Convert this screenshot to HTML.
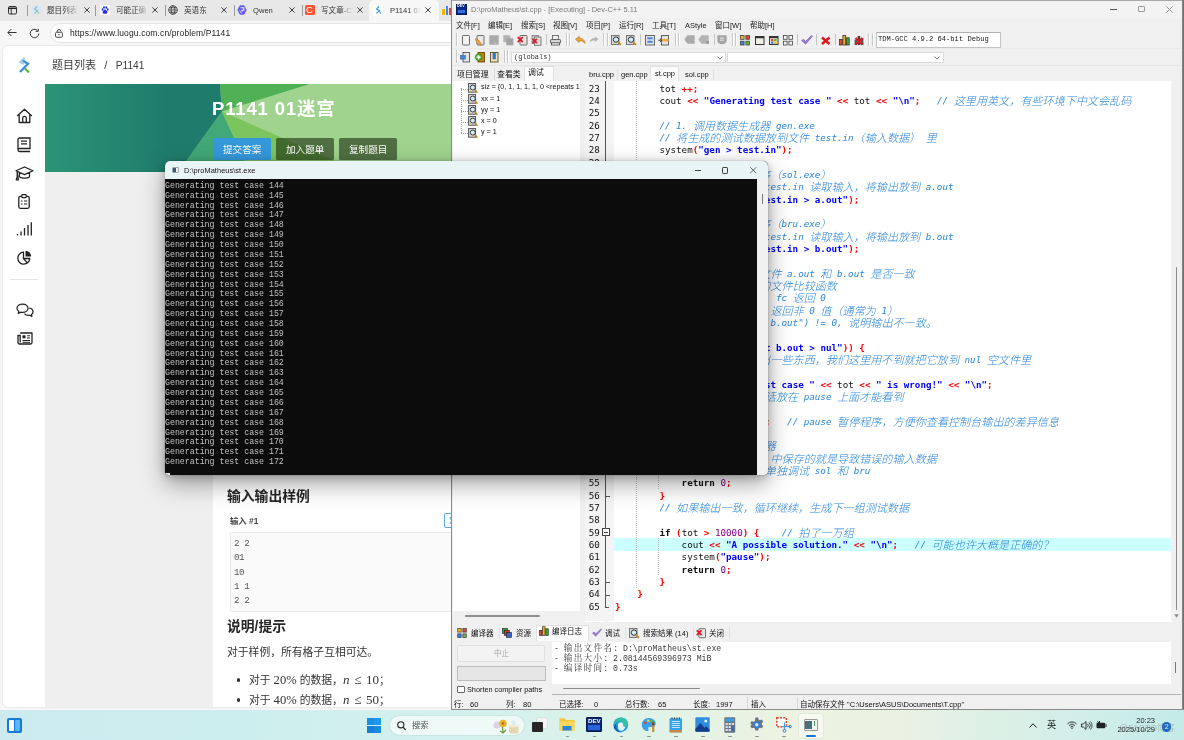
<!DOCTYPE html>
<html lang="zh-CN">
<head>
<meta charset="utf-8">
<title>P1141 01迷宫 - Dev-C++</title>
<style>
*{box-sizing:border-box;margin:0;padding:0}
html,body{width:1184px;height:740px;overflow:hidden;background:#f0f0f0}
body{position:relative;font-family:"Liberation Sans","Noto Sans CJK SC",sans-serif;font-size:7.4px;color:#222;-webkit-font-smoothing:antialiased}
.abs{position:absolute}
.t{position:absolute;white-space:nowrap;line-height:1}
svg{position:absolute;overflow:visible}
.t,.tabt,.h2,.dvt,.menu,.ln,.cl,.co,.logt{will-change:transform}
/* ---------- browser ---------- */
#br{position:absolute;left:0;top:0;width:453px;height:710px;background:#f7f7f7;overflow:hidden}
#tabbar{position:absolute;left:0;top:0;width:453px;height:20.6px;background:#e8e8e8}
.tabt{position:absolute;top:6px;font-size:7.6px;color:#333;white-space:nowrap;line-height:9px;overflow:hidden}
.tabx{position:absolute;top:4.5px;font-size:10px;color:#333;line-height:10px}
.tsep{position:absolute;top:5px;width:1px;height:11px;background:#9a9a9a}
#acttab{position:absolute;left:369px;top:0;width:70px;height:20.6px;background:#f7f7f7;border-radius:5px 5px 0 0}
#addr{position:absolute;left:50px;top:23px;width:420px;height:20px;border-radius:10px;background:#fff;border:1px solid #e3e3e3}
#page{position:absolute;left:3px;top:46px;width:460px;height:661px;background:#efefef;border-radius:5px 0 0 5px;overflow:hidden;box-shadow:0 0 2px rgba(0,0,0,.18)}
#lghead{position:absolute;left:0;top:0;width:460px;height:39px;background:#fff}
#lgside{position:absolute;left:0;top:39px;width:42px;height:625px;background:#fff}
#card{position:absolute;left:210px;top:126px;width:260px;height:540px;background:#fff}
.h2{position:absolute;font-weight:bold;font-size:13.8px;color:#262626;line-height:16px;white-space:nowrap}
.kx{font-family:"Liberation Serif","Noto Serif CJK SC",serif}
/* ---------- dev-c++ ---------- */
#dv{position:absolute;left:451px;top:0;width:733px;height:710px;background:#f0f0f0;border-left:1px solid #8c8c8c;border-bottom:1px solid #8a8a8a;overflow:hidden}
#dvtitle{position:absolute;left:0;top:0;width:733px;height:18px;background:#f3f3f3}
.menu{position:absolute;top:20.5px;font-size:7.5px;color:#1a1a1a;white-space:nowrap;line-height:9px}
#editor{position:absolute;left:133px;top:81px;width:588px;height:540.6px;background:#fff;overflow:hidden}
#gutter{position:absolute;left:0;top:0;width:28.5px;height:540px;background:#f4f4f4}
.ln{position:absolute;left:0px;width:14.5px;text-align:right;font-family:"DejaVu Sans Mono","Liberation Mono",monospace;font-size:9.2px;line-height:12.33px;height:12.33px;color:#111;letter-spacing:-0.2px}
.cl{position:absolute;left:29.7px;white-space:pre;font-family:"DejaVu Sans Mono","Liberation Mono","Noto Sans CJK SC",monospace;font-size:9.22px;line-height:12.33px;height:12.33px;color:#111}
.cl b{font-weight:bold}
.cm{color:#2a86da;font-style:italic}
.cm i{font-style:italic;font-size:11.1px;font-family:"Noto Sans CJK SC",sans-serif;font-weight:300;line-height:12.33px;vertical-align:top;display:inline-block;height:12.33px;margin-top:-0.6px}
.st{color:#0000ff;font-weight:bold}
.sy{color:#ff0000;font-weight:bold}
.nu{color:#800080}
.kw{font-weight:bold}
.dvt{position:absolute;white-space:nowrap;font-size:7.5px;line-height:9px;color:#111}
/* ---------- console ---------- */
#con{position:absolute;left:165px;top:161px;width:602.8px;height:313.5px;background:#0c0c0c;border-radius:5px 5px 4px 4px;box-shadow:0 9px 24px rgba(0,0,0,.36),0 2px 8px rgba(0,0,0,.22),0 0 1px rgba(0,0,0,.5);overflow:hidden}
#contitle{position:absolute;left:0;top:0;width:603px;height:18.4px;background:#e9f4f7}
#conscroll{position:absolute;left:592.3px;top:18.4px;width:10.6px;height:296px;background:#f1f1f1}
.co{position:absolute;left:0;white-space:pre;font-family:"Liberation Mono",monospace;font-size:8.25px;line-height:9.87px;height:9.87px;color:#c2c2c2}
/* ---------- taskbar ---------- */
#tb{position:absolute;left:0;top:710px;width:1184px;height:30px;background:linear-gradient(90deg,#cdebef 0%,#cdeeee 20%,#d4f1ed 42%,#e3f3e6 58%,#eef3e1 68%,#e9f2e3 76%,#d6efe8 88%,#c4ebe8 100%)}
.ind{position:absolute;top:25.5px;width:3.5px;height:1.3px;border-radius:1px;background:#8a9496}
.logt{position:absolute;left:101.5px;white-space:pre;font-family:"Liberation Mono",monospace;font-size:8.2px;line-height:10px;color:#3a3a3a}
.lc{font-family:"Noto Serif CJK SC","Noto Sans CJK SC",serif;font-size:8.6px;letter-spacing:1.27px}
</style>
</head>
<body>
<div id="br">
 <div id="tabbar">
  <!-- tab actions icon -->
  <svg style="left:8px;top:5.5px" width="9" height="8.5" viewBox="0 0 9 8.5"><rect x=".5" y=".5" width="8" height="7.5" rx="1.3" fill="none" stroke="#222" stroke-width=".95"/><path d="M.5 2.300h8" stroke="#222" stroke-width="1.5" fill="none"/><path d="M3.200 2.300v5.7" stroke="#222" stroke-width=".9" fill="none"/></svg>
  <div class="tsep" style="left:27px"></div>
  <!-- tab1 -->
  <div class="abs" style="left:32px;top:5px;width:9px;height:10px;background:#dfe6ee;border-radius:1px"></div>
  <svg style="left:33px;top:6px;opacity:.55" width="7" height="8" viewBox="0 0 14 16"><path d="M8 1L3 6l6 3-6 6" fill="none" stroke="#3498db" stroke-width="2.2"/><path d="M8 10l4 5" stroke="#52c41a" stroke-width="2.2"/></svg>
  <div class="tabt" style="left:47px;width:32px;-webkit-mask-image:linear-gradient(90deg,#000 55%,transparent 98%)">题目列表</div>
  <svg style="left:84.2px;top:7px" width="6" height="6" viewBox="0 0 6 6"><path d="M.4.4l5.200 5.200M5.600.4L.4 5.6" stroke="#222" stroke-width=".85"/></svg>
  <div class="tsep" style="left:95px"></div>
  <!-- tab2 baidu -->
  <div class="abs" style="left:100px;top:5px;width:10px;height:10px;background:#fff;border-radius:1px"></div>
  <svg style="left:101px;top:6px" width="8" height="8" viewBox="0 0 16 16"><g fill="#2932e1"><ellipse cx="3" cy="7" rx="1.8" ry="2.4"/><ellipse cx="6" cy="3" rx="1.8" ry="2.4"/><ellipse cx="10.5" cy="3" rx="1.8" ry="2.4"/><ellipse cx="13.5" cy="7" rx="1.8" ry="2.4"/><path d="M8 7c2 0 5 4 5 6s-2 2.5-5 2.5S3 15 3 13s3-6 5-6z"/></g></svg>
  <div class="tabt" style="left:116px;width:32px;-webkit-mask-image:linear-gradient(90deg,#000 60%,transparent 100%)">可能正确</div>
  <svg style="left:152.2px;top:7px" width="6" height="6" viewBox="0 0 6 6"><path d="M.4.4l5.200 5.200M5.600.4L.4 5.6" stroke="#222" stroke-width=".85"/></svg>
  <div class="tsep" style="left:165px"></div>
  <!-- tab3 globe -->
  <svg style="left:168px;top:5px" width="10" height="10" viewBox="0 0 20 20"><g fill="none" stroke="#333" stroke-width="1.6"><circle cx="10" cy="10" r="8.5"/><ellipse cx="10" cy="10" rx="3.8" ry="8.5"/><path d="M1.5 10h17M3 5.5h14M3 14.5h14"/></g></svg>
  <div class="tabt" style="left:184px;width:26px">英语东</div>
  <svg style="left:221.2px;top:7px" width="6" height="6" viewBox="0 0 6 6"><path d="M.4.4l5.200 5.200M5.600.4L.4 5.6" stroke="#222" stroke-width=".85"/></svg>
  <div class="tsep" style="left:234px"></div>
  <!-- tab4 qwen -->
  <svg style="left:237px;top:5px" width="10" height="10" viewBox="0 0 20 20"><path d="M6 1.500h8l4.500 8.500-4.500 8.500H6L1.500 10z" fill="#5f58ea" stroke="#5f58ea" stroke-width="1.5" stroke-linejoin="round"/><path d="M6.500 5.500h8L9 15M5 10.500l3.500 6M11 4l4 6.500h-7" stroke="#fff" stroke-width="1.4" fill="none"/></svg>
  <div class="tabt" style="left:253px;width:30px">Qwen</div>
  <svg style="left:289.2px;top:7px" width="6" height="6" viewBox="0 0 6 6"><path d="M.4.4l5.200 5.200M5.600.4L.4 5.6" stroke="#222" stroke-width=".85"/></svg>
  <div class="tsep" style="left:302px"></div>
  <!-- tab5 csdn -->
  <div class="abs" style="left:305px;top:5px;width:10px;height:10px;background:#fc5531;border-radius:1.5px"></div>
  <div class="t" style="left:306.3px;top:5.3px;font-size:9.5px;color:#fff;font-weight:normal">C</div>
  <div class="tabt" style="left:321px;width:32px;-webkit-mask-image:linear-gradient(90deg,#000 60%,transparent 100%)">写文章-C</div>
  <svg style="left:357.2px;top:7px" width="6" height="6" viewBox="0 0 6 6"><path d="M.4.4l5.200 5.200M5.600.4L.4 5.6" stroke="#222" stroke-width=".85"/></svg>
  <!-- active tab -->
  <div id="acttab"></div>
  <div class="abs" style="left:373px;top:4.5px;width:10px;height:11px;background:#fff;border-radius:1px"></div>
  <svg style="left:374.5px;top:6px" width="7" height="8" viewBox="0 0 14 16"><path d="M8 1L3 6l6 3-6 6" fill="none" stroke="#3498db" stroke-width="2.2"/><path d="M8 10l4 5" stroke="#3498db" stroke-width="2.2"/></svg>
  <div class="tabt" style="left:389.5px;width:31px;-webkit-mask-image:linear-gradient(90deg,#000 60%,transparent 100%)">P1141 01</div>
  <svg style="left:425.2px;top:7px" width="6" height="6" viewBox="0 0 6 6"><path d="M.4.4l5.200 5.200M5.600.4L.4 5.6" stroke="#222" stroke-width=".85"/></svg>
  <!-- next tab icon -->
  <div class="abs" style="left:442px;top:9px;width:2.5px;height:6px;background:#f4b400"></div>
  <div class="abs" style="left:445.5px;top:6px;width:2.5px;height:9px;background:#4285f4"></div>
  <div class="abs" style="left:449px;top:8px;width:2.5px;height:7px;background:#db4437"></div>
 </div>
 <!-- toolbar -->
 <svg style="left:7px;top:28px" width="10" height="9" viewBox="0 0 10 9"><path d="M9.6 4.5H1M4.4 1L.9 4.5 4.4 8" fill="none" stroke="#333" stroke-width="1"/></svg>
 <svg style="left:29px;top:27.5px" width="11" height="11" viewBox="0 0 22 22"><path d="M19.5 11a8.5 8.5 0 1 1-2.6-6.1" fill="none" stroke="#333" stroke-width="2"/><path d="M18.5 1.5v5.2h-5.2" fill="none" stroke="#333" stroke-width="2"/></svg>
 <div id="addr"></div>
 <svg style="left:55px;top:28.5px" width="8" height="9" viewBox="0 0 16 18"><rect x="1.2" y="6.5" width="13.6" height="10" rx="2" fill="none" stroke="#333" stroke-width="1.8"/><path d="M4.5 6.5V4.5a3.5 3.5 0 0 1 7 0" fill="none" stroke="#333" stroke-width="1.8"/><circle cx="8" cy="11.5" r="1.4" fill="#333"/></svg>
 <div class="t" style="left:70px;top:29px;font-size:8.5px;color:#222;letter-spacing:.12px">https://www.luogu.com.cn/problem/P1141</div>

 <div id="page">
  <div id="lghead"></div>
  <div id="lgside"></div>
  <!-- luogu logo -->
  <svg style="left:15.5px;top:10.5px" width="11" height="16" viewBox="0 0 22 32"><path d="M11 2L3 10l7 4" fill="none" stroke="#9ccbf0" stroke-width="4.4" stroke-linejoin="miter"/><path d="M8 7.500l10 6L2 30" fill="none" stroke="#3b8fd9" stroke-width="4.6"/><path d="M12 23l8 8" stroke="#5cb531" stroke-width="4.4"/></svg>
  <div class="t" style="left:49px;top:14.2px;font-size:11px;color:#3c3c3c;word-spacing:1.1px">题目列表&nbsp; /&nbsp; <span style="font-size:10.2px">P1141</span></div>
  <!-- banner -->
  <svg style="left:42px;top:38px" width="420" height="88" viewBox="0 0 420 88"><defs><linearGradient id="bg1" x1="0" x2="1" y1="0" y2="0"><stop offset="0" stop-color="#2b9476"/><stop offset=".68" stop-color="#1f7c6c"/><stop offset="1" stop-color="#1f7c6c"/></linearGradient></defs>
   <rect width="420" height="88" fill="#a0d38e"/>
   <polygon points="176.8,27.4 315.5,88 205,88" fill="#7cc55e"/>
   <polygon points="176.8,27.4 205,88 133.3,88" fill="#41a878"/>
   <polygon points="175,0 264.8,0 176.8,27.4" fill="#4fb056"/>
   <polygon points="0,0 175,0 176.8,27.4 133.3,88 0,88" fill="url(#bg1)"/>
  </svg>
  <div class="t" style="left:208.5px;top:53.7px;font-size:18.5px;font-weight:bold;color:#fff;letter-spacing:.85px">P1141 01迷宫</div>
  <div class="abs" style="left:210px;top:92px;width:58px;height:21.5px;background:#3498db;border-radius:1.5px"></div>
  <div class="t" style="left:220px;top:98.5px;font-size:9.6px;color:#fff">提交答案</div>
  <div class="abs" style="left:273.4px;top:92px;width:57.5px;height:21.5px;background:rgba(30,50,20,.62);border-radius:1.5px"></div>
  <div class="t" style="left:283px;top:98.5px;font-size:9.6px;color:#fff">加入题单</div>
  <div class="abs" style="left:336px;top:92px;width:58px;height:21.5px;background:rgba(30,50,20,.62);border-radius:1.5px"></div>
  <div class="t" style="left:346px;top:98.5px;font-size:9.6px;color:#fff">复制题目</div>
  <!-- card -->
  <div id="card"></div>
  <div class="h2" style="left:224px;top:442.5px">输入输出样例</div>
  <div class="t" style="left:227px;top:470.5px;font-size:8.4px;font-weight:bold;color:#444">输入 #1</div>
  <div class="abs" style="left:441px;top:467.2px;width:30px;height:15.3px;border:1px solid #5aa9e2;border-radius:2px;background:#fff"></div>
  <div class="t" style="left:445.8px;top:470.8px;font-size:7.8px;color:#3498db">复制</div>
  <div class="abs" style="left:227px;top:486px;width:240px;height:80px;background:#fafafa;border:1px solid #e8e8e8;border-radius:1.5px"></div>
  <div class="t kx" style="left:231px;top:491px;font-size:9.2px;line-height:14.3px;color:#555;white-space:pre;font-family:'Liberation Mono',monospace;letter-spacing:-.4px">2 2
01
10
1 1
2 2</div>
  <div class="h2" style="left:224px;top:572.8px">说明/提示</div>
  <div class="t" style="left:224px;top:601.2px;font-size:10.8px;color:#333">对于样例，所有格子互相可达。</div>
  <div class="abs" style="left:233.5px;top:632.2px;width:3.4px;height:3.4px;border-radius:50%;background:#333"></div>
  <div class="t" style="left:246px;top:627px;font-size:10.8px;color:#333">对于 <span class="kx" style="font-size:12.6px">20%</span> 的数据，<span class="kx" style="font-size:13px;word-spacing:1.5px"><i>n</i> ≤ 10</span>；</div>
  <div class="abs" style="left:233.5px;top:652.2px;width:3.4px;height:3.4px;border-radius:50%;background:#333"></div>
  <div class="t" style="left:246px;top:647px;font-size:10.8px;color:#333">对于 <span class="kx" style="font-size:12.6px">40%</span> 的数据，<span class="kx" style="font-size:13px;word-spacing:1.5px"><i>n</i> ≤ 50</span>；</div>
  <!-- sidebar icons -->
  <svg style="left:12.5px;top:61.8px" width="17" height="16" viewBox="0 0 17 16"><path d="M1.2 8L8.5 1.3 15.8 8M3.2 6.6v7.9h10.6V6.600M6.7 14.500V10.2a1.800 1.800 0 0 1 3.600 0V14.5" fill="none" stroke="#222" stroke-width="1.3" stroke-linejoin="round"/></svg>
  <svg style="left:14px;top:90.6px" width="14" height="15" viewBox="0 0 14 15"><path d="M1 12.500V2.500A1.500 1.500 0 0 1 2.500 1H13v10.500H2.500A1.500 1.500 0 0 0 1 13a1.500 1.500 0 0 0 1.500 1.500H13M4 4.200h6M4 6.800h6" fill="none" stroke="#222" stroke-width="1.3"/></svg>
  <svg style="left:11.5px;top:119.5px" width="19" height="15" viewBox="0 0 19 15"><path d="M9.500 1L1 4.800l8.500 3.800L18 4.800zM4.500 6.600v4.200c1.500 1.800 8.500 1.800 10 0V6.600M2.200 5.500v5.500l-1 2.800h2.200z" fill="none" stroke="#222" stroke-width="1.25" stroke-linejoin="round"/></svg>
  <svg style="left:15px;top:147.6px" width="12" height="15" viewBox="0 0 12 15"><rect x=".8" y="2.3" width="10.4" height="12" rx="1.5" fill="none" stroke="#222" stroke-width="1.3"/><rect x="3.8" y=".6" width="4.4" height="3" rx=".8" fill="#fff" stroke="#222" stroke-width="1.2"/><path d="M3 7h1.500M6 7h3.200M3 10h1.500M6 10h3.2" stroke="#222" stroke-width="1.2"/></svg>
  <svg style="left:13px;top:175.6px" width="16" height="14" viewBox="0 0 16 14"><path d="M1.500 13.500v-1.500M5 13.500v-4M8.500 13.500V6M12 13.500V3M15.300 13.500V.3" stroke="#222" stroke-width="1.3"/></svg>
  <svg style="left:14px;top:203.6px" width="15" height="15" viewBox="0 0 15 15"><path d="M6.500 2.200A6 6 0 1 0 12.800 8.500H6.500z" fill="none" stroke="#222" stroke-width="1.3" stroke-linejoin="round"/><path d="M8.500 .8a5.700 5.700 0 0 1 5.700 5.700H8.500z" fill="#222"/><path d="M6.500 8.500l4 4.5" stroke="#222" stroke-width="1.3"/></svg>
  <div class="abs" style="left:7px;top:232.7px;width:28px;height:1px;background:#e4e4e4"></div>
  <svg style="left:12.5px;top:257px" width="18" height="14" viewBox="0 0 18 14"><path d="M6.500 1C3.500 1 1 2.800 1 5.200c0 1.300.7 2.400 1.800 3.200L2.300 10.500l2.400-1.300c.6.100 1.200.2 1.800.2 3 0 5.500-1.800 5.500-4.200S9.500 1 6.500 1z" fill="none" stroke="#222" stroke-width="1.25" stroke-linejoin="round"/><path d="M13.200 5.200c2 .3 3.800 1.800 3.800 3.600 0 1.100-.6 2-1.500 2.700l.4 1.900-2.100-1.100c-2 .4-4.300-.3-5.300-1.7" fill="none" stroke="#222" stroke-width="1.25" stroke-linejoin="round"/></svg>
  <svg style="left:13.5px;top:286px" width="16" height="13" viewBox="0 0 16 13"><path d="M3.200 1H15v9.500a1.500 1.500 0 0 1-1.500 1.500H2.500A1.500 1.500 0 0 1 1 10.500V3.500h2.200V10.5" fill="none" stroke="#222" stroke-width="1.3" stroke-linejoin="round"/><rect x="5.5" y="3.3" width="3" height="3" fill="#222"/><path d="M10 3.800h3M10 6h3M5.500 8.500h7.500M5.500 10.300h7.5" stroke="#222" stroke-width="1"/></svg>
 </div>
</div>
<div id="dv">
 <div id="dvtitle"></div>
 <!-- app icon -->
 <div class="abs" style="left:4px;top:4px;width:10.5px;height:10.5px;background:#0a2a8c;border:1px solid #061a5c"></div>
 <div class="t" style="left:5px;top:5px;font-size:3.6px;font-weight:bold;color:#fff;letter-spacing:.1px">DEV</div>
 <div class="abs" style="left:5.5px;top:9.5px;width:7.5px;height:3.5px;background:#2f6fe0"></div>
 <div class="t" style="left:18.5px;top:5.5px;font-size:7.45px;color:#7a7a7a">D:\proMatheus\st.cpp - [Executing] - Dev-C++ 5.11</div>
 <!-- window controls -->
 <div class="abs" style="left:657.5px;top:9px;width:7px;height:1px;background:#555"></div>
 <div class="abs" style="left:686px;top:5.5px;width:6.5px;height:6.5px;border:1px solid #9a9a9a;border-radius:1px"></div>
 <svg style="left:713.5px;top:5.5px" width="7" height="7" viewBox="0 0 7 7"><path d="M.3.3l6.400 6.400M6.700.3L.3 6.7" stroke="#8f8f8f" stroke-width=".9"/></svg>
 <!-- menu -->
 <div class="menu" style="left:4px">文件[F]</div>
 <div class="menu" style="left:36px">编辑[E]</div>
 <div class="menu" style="left:68.5px">搜索[S]</div>
 <div class="menu" style="left:101px">视图[V]</div>
 <div class="menu" style="left:134px">项目[P]</div>
 <div class="menu" style="left:167px">运行[R]</div>
 <div class="menu" style="left:200px">工具[T]</div>
 <div class="menu" style="left:233px">AStyle</div>
 <div class="menu" style="left:263px">窗口[W]</div>
 <div class="menu" style="left:298px">帮助[H]</div>
 <!-- toolbar row separators -->
 <div class="abs" style="left:0;top:0;width:733px;height:1px;background:#a9a9a9"></div>
 <div class="abs" style="left:0;top:48px;width:733px;height:1px;background:#eaeaea"></div>
 <div class="abs" style="left:0;top:65px;width:733px;height:1px;background:#e6e6e6"></div>
 <div class="abs" style="left:3.5px;top:33px;width:1px;height:13px;background:#c9c9c9;box-shadow:1px 0 0 #fff"></div>
<svg style="left:9.5px;top:34.5px" width="8" height="10.5" viewBox="0 0 8 10.5"><rect x=".5" y=".5" width="7" height="9.5" rx=".8" fill="#f4f4f4" stroke="#6a6a6a" stroke-width="1"/></svg>
<svg style="left:23px;top:34.5px" width="9.5" height="10.5" viewBox="0 0 9.5 10.5"><rect x="2" y=".5" width="7" height="9.5" rx=".8" fill="#e9e9e9" stroke="#6a6a6a"/><path d="M.5 3.500C1 8 3.500 10 7 10L4 5.500z" fill="#f0a63c" stroke="#b87416" stroke-width=".6"/></svg>
<svg style="left:37px;top:35px" width="10" height="10" viewBox="0 0 10 10"><rect x=".3" y=".3" width="9.4" height="9.4" fill="#a9a9a9"/><rect x="5.5" y="7.5" width="1.8" height=".9" fill="#e0e0e0"/></svg>
<svg style="left:51px;top:35px" width="10.5" height="10.5" viewBox="0 0 10.5 10.5"><rect x=".3" y=".3" width="7" height="7" fill="#b2b2b2"/><rect x="3.3" y="3.3" width="7" height="7" fill="#a3a3a3"/></svg>
<svg style="left:65px;top:34.5px" width="10.5" height="10.5" viewBox="0 0 10.5 10.5"><rect x="3" y=".5" width="7" height="9.5" rx=".6" fill="#e6e6e6" stroke="#6a6a6a"/><path d="M.8 2.200l5 5M5.800 2.200l-5 5" stroke="#e01b24" stroke-width="1.9"/></svg>
<svg style="left:79px;top:34.5px" width="10.5" height="10.5" viewBox="0 0 10.5 10.5"><rect x="1" y=".5" width="6.5" height="8" fill="#cfcfcf" stroke="#7a7a7a" stroke-width=".8"/><rect x="3.5" y="2" width="6.5" height="8.3" fill="#dedede" stroke="#6a6a6a" stroke-width=".8"/><path d="M1.500 3.800l4.400 4.400M5.900 3.800l-4.400 4.4" stroke="#e01b24" stroke-width="1.8"/></svg>
<div class="abs" style="left:93.5px;top:34px;width:1px;height:11px;background:#c4c4c4"></div>
<svg style="left:98px;top:34.5px" width="11" height="10.5" viewBox="0 0 11 10.5"><rect x="2.5" y=".5" width="6" height="4.5" fill="#f2f2f2" stroke="#6a6a6a" stroke-width=".9"/><rect x=".5" y="4.6" width="10" height="3.6" rx=".6" fill="#dcdcdc" stroke="#555" stroke-width=".9"/><rect x="1.5" y="7.8" width="8" height="2.2" fill="#f6f6f6" stroke="#555" stroke-width=".9"/></svg>
<div class="abs" style="left:113.5px;top:33px;width:1px;height:13px;background:#c9c9c9;box-shadow:1px 0 0 #fff"></div>
<div class="abs" style="left:117px;top:33px;width:1px;height:13px;background:#c9c9c9;box-shadow:1px 0 0 #fff"></div>
<svg style="left:123px;top:35.5px" width="10.5" height="8" viewBox="0 0 10.5 8"><path d="M.5 3.200L4.200 .4v1.800c3.500 0 5.500 2 5.800 5.300C8.500 5.300 6.800 4.600 4.200 4.700v1.800z" fill="#f0a63c" stroke="#a8690f" stroke-width=".6"/></svg>
<svg style="left:137px;top:36px" width="10" height="7" viewBox="0 0 10 7"><path d="M9.500 3L6 .4v1.600C3 2 1 3.600.5 6.500 2 4.800 3.800 4.400 6 4.500v1.600z" fill="#b5b5b5"/></svg>
<div class="abs" style="left:151px;top:33px;width:1px;height:13px;background:#c9c9c9;box-shadow:1px 0 0 #fff"></div>
<div class="abs" style="left:154.5px;top:33px;width:1px;height:13px;background:#c9c9c9;box-shadow:1px 0 0 #fff"></div>
<svg style="left:159px;top:34.5px" width="10.5" height="10.5" viewBox="0 0 10.5 10.5"><rect x=".5" y=".5" width="7.5" height="9" fill="#dadada" stroke="#6a6a6a" stroke-width=".9"/><circle cx="5" cy="4.6" r="2.7" fill="#cfeefa" stroke="#333" stroke-width="1"/><path d="M7 6.800l3 3" stroke="#c58a17" stroke-width="1.7"/></svg>
<svg style="left:173.5px;top:34.5px" width="10.5" height="10.5" viewBox="0 0 10.5 10.5"><rect x=".5" y=".5" width="7.5" height="9" fill="#dadada" stroke="#6a6a6a" stroke-width=".9"/><circle cx="5" cy="4.6" r="2.7" fill="#cfeefa" stroke="#333" stroke-width="1"/><path d="M7 6.800l3 3" stroke="#c58a17" stroke-width="1.7"/></svg>
<div class="abs" style="left:188px;top:34px;width:1px;height:11px;background:#c4c4c4"></div>
<svg style="left:193px;top:34.5px" width="10" height="10.5" viewBox="0 0 10 10.5"><rect x=".5" y=".5" width="9" height="9.5" fill="#e4e4e4" stroke="#555" stroke-width=".9"/><rect x="2.3" y="2.3" width="5.4" height="2" fill="#4a86d8"/><rect x="2.3" y="5.8" width="5.4" height="2" fill="#4a86d8"/></svg>
<svg style="left:206px;top:34.5px" width="11" height="10.5" viewBox="0 0 11 10.5"><rect x="3.5" y=".5" width="7" height="9.5" fill="#e4e4e4" stroke="#555" stroke-width=".9"/><rect x="3.5" y="4" width="7" height="2.4" fill="#f0a63c"/><path d="M.2 5.200h3.200M2 3.600l1.800 1.600L2 6.8" stroke="#333" stroke-width=".9" fill="none"/></svg>
<div class="abs" style="left:222.5px;top:33px;width:1px;height:13px;background:#c9c9c9;box-shadow:1px 0 0 #fff"></div>
<div class="abs" style="left:225.5px;top:33px;width:1px;height:13px;background:#c9c9c9;box-shadow:1px 0 0 #fff"></div>
<svg style="left:231.5px;top:35px" width="11" height="9" viewBox="0 0 11 9"><path d="M3.500 .3h7.200v8.400H3.500L.3 4.500z" fill="#ababab"/></svg>
<svg style="left:245.5px;top:35px" width="11" height="9" viewBox="0 0 11 9"><path d="M3.500 .3h7.200v8.400H3.500L.3 4.500z" fill="#b4b4b4"/><rect x="8.5" y="6" width="2.2" height="2.7" fill="#8d8d8d"/></svg>
<div class="abs" style="left:261.5px;top:34px;width:1px;height:11px;background:#c4c4c4"></div>
<svg style="left:265px;top:35px" width="10" height="9.5" viewBox="0 0 10 9.5"><path d="M.3.300h9.400v5.500c0 2-2 3.500-4.700 3.500S.3 7.800.3 5.800z" fill="#a5a5a5"/><rect x="3" y="2.5" width="4" height="1.2" fill="#dedede"/><rect x="3" y="4.6" width="4" height="1.2" fill="#dedede"/></svg>
<div class="abs" style="left:279.5px;top:33px;width:1px;height:13px;background:#c9c9c9;box-shadow:1px 0 0 #fff"></div>
<div class="abs" style="left:282.5px;top:33px;width:1px;height:13px;background:#c9c9c9;box-shadow:1px 0 0 #fff"></div>
<svg style="left:287.5px;top:34.5px" width="10" height="10.5" viewBox="0 0 10 10.5"><rect x=".5" y=".5" width="3.6" height="3.8" fill="#f6b21b" stroke="#444" stroke-width=".8"/><rect x="5.9" y=".5" width="3.6" height="3.8" fill="#e8432e" stroke="#444" stroke-width=".8"/><rect x=".5" y="6.2" width="3.6" height="3.8" fill="#3b7fdc" stroke="#444" stroke-width=".8"/><rect x="5.9" y="6.2" width="3.6" height="3.8" fill="#5dbb3b" stroke="#444" stroke-width=".8"/></svg>
<svg style="left:302.5px;top:35.5px" width="9.5" height="9" viewBox="0 0 9.5 9"><rect x=".5" y=".5" width="8.5" height="8" fill="#f2efe6" stroke="#333" stroke-width="1"/><rect x=".5" y=".5" width="8.5" height="1.8" fill="#333"/></svg>
<svg style="left:316.5px;top:35.5px" width="9.5" height="9" viewBox="0 0 9.5 9"><rect x=".5" y=".5" width="8.5" height="8" fill="#fff" stroke="#333" stroke-width="1"/><rect x=".5" y=".5" width="8.5" height="1.8" fill="#333"/><rect x="1.8" y="3" width="2.7" height="2.3" fill="#e8432e"/><rect x="5" y="3" width="2.7" height="2.3" fill="#5dbb3b"/><rect x="1.8" y="5.6" width="2.7" height="2.2" fill="#3b7fdc"/><rect x="5" y="5.6" width="2.7" height="2.2" fill="#f6b21b"/></svg>
<svg style="left:330.5px;top:34.5px" width="10" height="10.5" viewBox="0 0 10 10.5"><g fill="#f4f4f4" stroke="#444" stroke-width=".8"><rect x=".5" y=".5" width="3.6" height="3.8"/><rect x="5.9" y=".5" width="3.6" height="3.8"/><rect x=".5" y="6.2" width="3.6" height="3.8"/><rect x="5.9" y="6.2" width="3.6" height="3.8"/></g></svg>
<div class="abs" style="left:345px;top:34px;width:1px;height:11px;background:#c4c4c4"></div>
<svg style="left:348.5px;top:35px" width="12" height="9.5" viewBox="0 0 12 9.5"><path d="M.6 5.500l2-1.300 1.800 2.300L10.600.5l.9.700L4.600 9.200z" fill="#9a7fd6" stroke="#5b3fa0" stroke-width=".5"/></svg>
<div class="abs" style="left:363.5px;top:34px;width:1px;height:11px;background:#c4c4c4"></div>
<svg style="left:369px;top:35.5px" width="9.5" height="9" viewBox="0 0 9.5 9"><path d="M1 1.500l7.500 6.500M8.500 1.500L1 8" stroke="#e0161e" stroke-width="2.4"/></svg>
<div class="abs" style="left:382.5px;top:34px;width:1px;height:11px;background:#c4c4c4"></div>
<svg style="left:387px;top:34.5px" width="11" height="10.5" viewBox="0 0 11 10.5"><rect x=".6" y="4.5" width="2.6" height="5.5" fill="#e8432e" stroke="#222" stroke-width=".7"/><rect x="3.9" y=".6" width="2.8" height="9.4" fill="#f6b21b" stroke="#222" stroke-width=".7"/><rect x="7.4" y="2.8" width="2.8" height="7.2" fill="#3fa54a" stroke="#222" stroke-width=".7"/></svg>
<svg style="left:402px;top:34.5px" width="10" height="10.5" viewBox="0 0 10 10.5"><rect x=".6" y="4.5" width="2.4" height="5.5" fill="#555"/><rect x="3.6" y="1" width="2.6" height="9" fill="#444"/><rect x="6.8" y="3" width="2.6" height="7" fill="#555"/><path d="M1.500 3l7 6.500M8.500 3l-7 6.5" stroke="#e0161e" stroke-width="2"/></svg>
<div class="abs" style="left:416px;top:33px;width:1px;height:13px;background:#c9c9c9;box-shadow:1px 0 0 #fff"></div>
<div class="abs" style="left:419.5px;top:33px;width:1px;height:13px;background:#c9c9c9;box-shadow:1px 0 0 #fff"></div>
<div class="abs" style="left:3.5px;top:50px;width:1px;height:13px;background:#c9c9c9;box-shadow:1px 0 0 #fff"></div>
<svg style="left:8px;top:51.5px" width="10" height="10.5" viewBox="0 0 10 10.5"><rect x="3" y=".5" width="6.5" height="9.5" fill="#e3e3e3" stroke="#555" stroke-width=".9"/><rect x=".3" y="3.5" width="5" height="3.6" fill="#4a86d8" stroke="#2a4f8a" stroke-width=".5"/></svg>
<svg style="left:23px;top:51.5px" width="10" height="10.5" viewBox="0 0 10 10.5"><rect x="3" y=".5" width="6.5" height="9.5" fill="#c8820e" stroke="#6b4507" stroke-width=".9"/><circle cx="3.6" cy="5.2" r="3.3" fill="#4ec22c" stroke="#1f7a0c" stroke-width=".6"/><path d="M3.600 3.200v4M1.600 5.200h4" stroke="#fff" stroke-width="1.2"/></svg>
<svg style="left:38px;top:51.5px" width="8.5" height="10.5" viewBox="0 0 8.5 10.5"><rect x=".5" y=".5" width="7.5" height="9.5" fill="#f1e2b8" stroke="#5c4a1a" stroke-width=".9"/><rect x="2.6" y=".8" width="3.2" height="6.5" fill="#2f74d0"/></svg>
<div class="abs" style="left:51.5px;top:50px;width:1px;height:13px;background:#c9c9c9;box-shadow:1px 0 0 #fff"></div>
<div class="abs" style="left:55px;top:50px;width:1px;height:13px;background:#c9c9c9;box-shadow:1px 0 0 #fff"></div>

 <!-- compiler combo -->
 <div class="abs" style="left:423.5px;top:32px;width:125px;height:15.5px;background:#fff;border:1px solid #c4c4c4;border-top-color:#b0b0b0"></div>
 <div class="t" style="left:425.8px;top:36px;font-family:'Liberation Mono',monospace;font-size:7.1px;color:#222;letter-spacing:0">TDM-GCC 4.9.2 64-bit Debug</div>
 <!-- combos row 2 -->
 <div class="abs" style="left:58.5px;top:51.5px;width:215px;height:11.5px;background:#fff;border:1px solid #dadada"></div>
 <div class="t" style="left:62px;top:54px;font-family:'Liberation Mono',monospace;font-size:6.95px;color:#333">(globals)</div>
 <svg style="left:265px;top:55.5px" width="6" height="4" viewBox="0 0 6 4"><path d="M.4.500L3 3.200 5.600.5" fill="none" stroke="#555" stroke-width=".8"/></svg>
 <div class="abs" style="left:274.5px;top:51.5px;width:217px;height:11.5px;background:#fff;border:1px solid #dadada"></div>
 <svg style="left:482px;top:55.5px" width="6" height="4" viewBox="0 0 6 4"><path d="M.4.500L3 3.200 5.600.5" fill="none" stroke="#555" stroke-width=".8"/></svg>
 <!-- left panel tabs -->
 <div class="abs" style="left:42px;top:68px;width:1px;height:12px;background:#dcdcdc"></div>
 <div class="abs" style="left:72px;top:66px;width:30px;height:15px;background:#fbfbfb;border:1px solid #e0e0e0;border-bottom:none"></div>
 <div class="dvt" style="left:5px;top:69.5px;font-size:7.9px">项目管理</div>
 <div class="dvt" style="left:44.5px;top:69.5px;font-size:7.9px">查看类</div>
 <div class="dvt" style="left:76px;top:68px;font-size:7.9px">调试</div>
 <!-- left tree -->
 <div class="abs" style="left:1px;top:80.5px;width:127px;height:530.5px;background:#fff"></div>
 <div class="abs" style="left:9px;top:88.6px;width:7px;height:0;border-top:1px dotted #a0a0a0"></div>
<svg style="left:16.2px;top:82.9px" width="9.8" height="10.3" viewBox="0 0 9 9.5"><rect x=".5" y=".5" width="6.5" height="8" fill="#d9d9d9" stroke="#555" stroke-width=".9"/><circle cx="4.4" cy="4.2" r="2.3" fill="#cfeefa" stroke="#333" stroke-width=".9"/><path d="M6.200 6.200l2.500 2.8" stroke="#c58a17" stroke-width="1.5"/></svg>
<div class="dvt" style="left:29px;top:83.3px;font-size:7.15px;width:98.5px;overflow:hidden;">siz = {0, 1, 1, 1, 1, 0 &lt;repeats 10</div>
<div class="abs" style="left:9px;top:99.8px;width:7px;height:0;border-top:1px dotted #a0a0a0"></div>
<svg style="left:16.2px;top:94px" width="9.8" height="10.3" viewBox="0 0 9 9.5"><rect x=".5" y=".5" width="6.5" height="8" fill="#d9d9d9" stroke="#555" stroke-width=".9"/><circle cx="4.4" cy="4.2" r="2.3" fill="#cfeefa" stroke="#333" stroke-width=".9"/><path d="M6.200 6.200l2.500 2.8" stroke="#c58a17" stroke-width="1.5"/></svg>
<div class="dvt" style="left:29px;top:94.5px;font-size:7.15px;">xx = 1</div>
<div class="abs" style="left:9px;top:110.9px;width:7px;height:0;border-top:1px dotted #a0a0a0"></div>
<svg style="left:16.2px;top:105.2px" width="9.8" height="10.3" viewBox="0 0 9 9.5"><rect x=".5" y=".5" width="6.5" height="8" fill="#d9d9d9" stroke="#555" stroke-width=".9"/><circle cx="4.4" cy="4.2" r="2.3" fill="#cfeefa" stroke="#333" stroke-width=".9"/><path d="M6.200 6.200l2.500 2.8" stroke="#c58a17" stroke-width="1.5"/></svg>
<div class="dvt" style="left:29px;top:105.6px;font-size:7.15px;">yy = 1</div>
<div class="abs" style="left:9px;top:122px;width:7px;height:0;border-top:1px dotted #a0a0a0"></div>
<svg style="left:16.2px;top:116.3px" width="9.8" height="10.3" viewBox="0 0 9 9.5"><rect x=".5" y=".5" width="6.5" height="8" fill="#d9d9d9" stroke="#555" stroke-width=".9"/><circle cx="4.4" cy="4.2" r="2.3" fill="#cfeefa" stroke="#333" stroke-width=".9"/><path d="M6.200 6.200l2.500 2.8" stroke="#c58a17" stroke-width="1.5"/></svg>
<div class="dvt" style="left:29px;top:116.8px;font-size:7.15px;">x = 0</div>
<div class="abs" style="left:9px;top:133.2px;width:7px;height:0;border-top:1px dotted #a0a0a0"></div>
<svg style="left:16.2px;top:127.5px" width="9.8" height="10.3" viewBox="0 0 9 9.5"><rect x=".5" y=".5" width="6.5" height="8" fill="#d9d9d9" stroke="#555" stroke-width=".9"/><circle cx="4.4" cy="4.2" r="2.3" fill="#cfeefa" stroke="#333" stroke-width=".9"/><path d="M6.200 6.200l2.500 2.8" stroke="#c58a17" stroke-width="1.5"/></svg>
<div class="dvt" style="left:29px;top:127.9px;font-size:7.15px;">y = 1</div>
<div class="abs" style="left:9px;top:88px;width:0;height:44.6px;border-left:1px dotted #a0a0a0"></div>

  <!-- editor tabs -->
 <div class="abs" style="left:133px;top:66px;width:588px;height:15px;background:#f0f0f0"></div>
 <div class="abs" style="left:198px;top:65.5px;width:29px;height:16px;background:#fbfbfb;border:1px solid #e3e3e3;border-bottom:none"></div>
 <div class="abs" style="left:164.5px;top:69px;width:1px;height:11px;background:#e0e0e0"></div>
 <div class="abs" style="left:260.5px;top:69px;width:1px;height:11px;background:#e0e0e0"></div>
 <div class="dvt" style="left:136.5px;top:70px">bru.cpp</div>
 <div class="dvt" style="left:169px;top:70px">gen.cpp</div>
 <div class="dvt" style="left:202.5px;top:68.5px">st.cpp</div>
 <div class="dvt" style="left:232.5px;top:70px">sol.cpp</div>
<div id="editor">
<div class="abs" style="left:28.5px;top:457.22px;width:560px;height:12.33px;background:#ccffff"></div>
<div id="gutter"></div>
<div class="abs" style="left:19.7px;top:0;width:1.3px;height:539px;background:#555"></div>
<div class="abs" style="left:51.2px;top:0;width:0;height:506.7px;border-left:1px dotted #bdbdbd"></div>
<div class="abs" style="left:73.4px;top:272.3px;width:0;height:135.7px;border-left:1px dotted #bdbdbd"></div>
<div class="abs" style="left:73.4px;top:457.3px;width:0;height:37px;border-left:1px dotted #bdbdbd"></div>
<div class="ln" style="top:1.8px">23</div>
<div class="cl" style="top:1.8px">        tot <span class="sy">+</span><span class="sy">+</span><span class="sy">;</span></div>
<div class="ln" style="top:14.13px">24</div>
<div class="cl" style="top:14.13px">        cout <span class="sy">&lt;</span><span class="sy">&lt;</span> <span class="st">"Generating test case "</span> <span class="sy">&lt;</span><span class="sy">&lt;</span> tot <span class="sy">&lt;</span><span class="sy">&lt;</span> <span class="st">"\n"</span><span class="sy">;</span>   <span class="cm">// <i>这里用英文，有些环境下中文会乱码</i></span></div>
<div class="ln" style="top:26.47px">25</div>
<div class="ln" style="top:38.8px">26</div>
<div class="cl" style="top:38.8px">        <span class="cm">// 1. <i>调用数据生成器</i> gen.exe</span></div>
<div class="ln" style="top:51.13px">27</div>
<div class="cl" style="top:51.13px">        <span class="cm">// <i>将生成的测试数据放到文件</i> test.in<i>（输入数据）</i> <i>里</i></span></div>
<div class="ln" style="top:63.46px">28</div>
<div class="cl" style="top:63.46px">        system<span class="sy">(</span><span class="st">"gen &gt; test.in"</span><span class="sy">)</span><span class="sy">;</span></div>
<div class="ln" style="top:75.8px">29</div>
<div class="ln" style="top:88.13px">30</div>
<div class="cl" style="top:88.13px">        <span class="cm">// 2. <i>运行待测的程序（</i>sol.exe<i>）</i></span></div>
<div class="ln" style="top:100.46px">31</div>
<div class="cl" style="top:100.46px">        <span class="cm">// <i>让待测程序先从</i>  test.in <i>读取输入，将输出放到</i> a.out</span></div>
<div class="ln" style="top:112.8px">32</div>
<div class="cl" style="top:112.8px">        system<span class="sy">(</span><span class="st">"sol.exe &lt; test.in &gt; a.out"</span><span class="sy">)</span><span class="sy">;</span></div>
<div class="ln" style="top:125.13px">33</div>
<div class="ln" style="top:137.46px">34</div>
<div class="cl" style="top:137.46px">        <span class="cm">// 3. <i>运行暴力的程序（</i>bru.exe<i>）</i></span></div>
<div class="ln" style="top:149.8px">35</div>
<div class="cl" style="top:149.8px">        <span class="cm">// <i>让暴力程序也从</i>  test.in <i>读取输入，将输出放到</i> b.out</span></div>
<div class="ln" style="top:162.13px">36</div>
<div class="cl" style="top:162.13px">        system<span class="sy">(</span><span class="st">"bru.exe &lt; test.in &gt; b.out"</span><span class="sy">)</span><span class="sy">;</span></div>
<div class="ln" style="top:174.46px">37</div>
<div class="ln" style="top:186.8px">38</div>
<div class="cl" style="top:186.8px">        <span class="cm">// 4. <i>比较两份输出文件</i> a.out <i>和</i> b.out <i>是否一致</i></span></div>
<div class="ln" style="top:199.13px">39</div>
<div class="cl" style="top:199.13px">        <span class="cm">// fc <i>是系统里自带的文件比较函数</i></span></div>
<div class="ln" style="top:211.46px">40</div>
<div class="cl" style="top:211.46px">        <span class="cm">// <i>如果两个文件相同</i>, fc <i>返回</i> 0</span></div>
<div class="ln" style="top:223.79px">41</div>
<div class="cl" style="top:223.79px">        <span class="cm">// <i>如果两个文件不同</i>,<i>返回非</i> 0 <i>值（通常为</i> 1<i>）</i></span></div>
<div class="ln" style="top:236.13px">42</div>
<div class="cl" style="top:236.13px">        <span class="cm">// system("fc a.out b.out") != 0, <i>说明输出不一致。</i></span></div>
<div class="ln" style="top:248.46px">43</div>
<div class="ln" style="top:260.79px">44</div>
<div class="cl" style="top:260.79px">        <b>if</b> <span class="sy">(</span>system<span class="sy">(</span><span class="st">"fc a.out b.out &gt; nul"</span><span class="sy">)</span><span class="sy">)</span> <span class="sy">{</span></div>
<div class="ln" style="top:273.13px">45</div>
<div class="cl" style="top:273.13px">            <span class="cm">// fc <i>本身会输出一些东西，我们这里用不到就把它放到</i> nul <i>空文件里</i></span></div>
<div class="ln" style="top:285.46px">46</div>
<div class="ln" style="top:297.79px">47</div>
<div class="cl" style="top:297.79px">            cout <span class="sy">&lt;</span><span class="sy">&lt;</span> <span class="st">"The test case "</span> <span class="sy">&lt;</span><span class="sy">&lt;</span> tot <span class="sy">&lt;</span><span class="sy">&lt;</span> <span class="st">" is wrong!"</span> <span class="sy">&lt;</span><span class="sy">&lt;</span> <span class="st">"\n"</span><span class="sy">;</span></div>
<div class="ln" style="top:310.12px">48</div>
<div class="cl" style="top:310.12px">            <span class="cm">// <i>注意上面这句话放在</i> pause <i>上面才能看到</i></span></div>
<div class="ln" style="top:322.46px">49</div>
<div class="ln" style="top:334.79px">50</div>
<div class="cl" style="top:334.79px">            system<span class="sy">(</span><span class="st">"pause"</span><span class="sy">)</span><span class="sy">;</span>   <span class="cm">// pause <i>暂停程序，方便你查看控制台输出的差异信息</i></span></div>
<div class="ln" style="top:347.12px">51</div>
<div class="ln" style="top:359.46px">52</div>
<div class="cl" style="top:359.46px">            <span class="cm">// <i>然后退出对拍器</i></span></div>
<div class="ln" style="top:371.79px">53</div>
<div class="cl" style="top:371.79px">            <span class="cm">// <i>此时</i> test.in <i>中保存的就是导致错误的输入数据</i></span></div>
<div class="ln" style="top:384.12px">54</div>
<div class="cl" style="top:384.12px;clip-path:inset(0 0 0 153px)">            <span class="cm">// <i>你可以用它来单独调试</i> sol <i>和</i> bru</span></div>
<div class="ln" style="top:396.46px">55</div>
<div class="cl" style="top:396.46px">            <b>return</b> <span class="nu">0</span><span class="sy">;</span></div>
<div class="ln" style="top:408.79px">56</div>
<div class="cl" style="top:408.79px">        <span class="sy">}</span></div>
<div class="ln" style="top:421.12px">57</div>
<div class="cl" style="top:421.12px">        <span class="cm">// <i>如果输出一致，循环继续，生成下一组测试数据</i></span></div>
<div class="ln" style="top:433.46px">58</div>
<div class="ln" style="top:445.79px">59</div>
<div class="cl" style="top:445.79px">        <b>if</b> <span class="sy">(</span>tot <span class="sy">&gt;</span> <span class="nu">10000</span><span class="sy">)</span> <span class="sy">{</span>    <span class="cm">// <i>拍了一万组</i></span></div>
<div class="ln" style="top:458.12px">60</div>
<div class="cl" style="top:458.12px">            cout <span class="sy">&lt;</span><span class="sy">&lt;</span> <span class="st">"A possible solution."</span> <span class="sy">&lt;</span><span class="sy">&lt;</span> <span class="st">"\n"</span><span class="sy">;</span>   <span class="cm">// <i>可能也许大概是正确的？</i></span></div>
<div class="ln" style="top:470.45px">61</div>
<div class="cl" style="top:470.45px">            system<span class="sy">(</span><span class="st">"pause"</span><span class="sy">)</span><span class="sy">;</span></div>
<div class="ln" style="top:482.79px">62</div>
<div class="cl" style="top:482.79px">            <b>return</b> <span class="nu">0</span><span class="sy">;</span></div>
<div class="ln" style="top:495.12px">63</div>
<div class="cl" style="top:495.12px">        <span class="sy">}</span></div>
<div class="ln" style="top:507.45px">64</div>
<div class="cl" style="top:507.45px">    <span class="sy">}</span></div>
<div class="ln" style="top:519.79px">65</div>
<div class="cl" style="top:519.79px"><span class="sy">}</span></div>
<div class="abs" style="left:20.5px;top:415px;width:4px;height:1px;background:#555"></div>
<div class="abs" style="left:20.5px;top:501.3px;width:4px;height:1px;background:#555"></div>
<div class="abs" style="left:20.5px;top:513.6px;width:4px;height:1px;background:#555"></div>
<div class="abs" style="left:19.7px;top:526px;width:4.5px;height:1.2px;background:#555"></div>
<div class="abs" style="left:19.5px;top:527.2px;width:3px;height:100px;background:#f4f4f4"></div>
<div class="abs" style="left:17px;top:447.4px;width:8px;height:8px;background:#fff;border:1px solid #444"></div>
<div class="abs" style="left:19px;top:450.9px;width:4px;height:1px;background:#444"></div>
</div> <!-- editor scrollbar -->
 <div class="abs" style="left:719px;top:81px;width:10px;height:540px;background:#f0f0f0"></div>
 <div class="abs" style="left:723.5px;top:267px;width:1.3px;height:343px;background:#8a8a8a;border-radius:1px"></div>
 <svg style="left:721.5px;top:613.5px" width="5" height="4" viewBox="0 0 5 4"><path d="M.2.300h4.600L2.500 3.800z" fill="#8a8a8a"/></svg>
 <!-- left panel hscroll area -->
 <div class="abs" style="left:3px;top:611px;width:125.5px;height:10px;background:#f0f0f0"></div>
 <div class="abs" style="left:13px;top:615.2px;width:75px;height:1.7px;background:#8f8f8f;border-radius:1px"></div>
 <!-- bottom tabs -->
 <div class="abs" style="left:83.5px;top:625px;width:53.5px;height:16px;background:#fbfbfb;border:1px solid #e2e2e2;border-bottom:none"></div>
 <div class="abs" style="left:46.5px;top:627px;width:1px;height:12px;background:#e0e0e0"></div>
 <div class="abs" style="left:172.5px;top:627px;width:1px;height:12px;background:#e0e0e0"></div>
 <div class="abs" style="left:240.5px;top:627px;width:1px;height:12px;background:#e0e0e0"></div>
 <div class="abs" style="left:276.5px;top:627px;width:1px;height:12px;background:#e0e0e0"></div>
 <svg style="left:5px;top:627.5px" width="10" height="10" viewBox="0 0 10 10.5"><rect x=".5" y=".5" width="3.6" height="3.8" fill="#f6b21b" stroke="#444" stroke-width=".8"/><rect x="5.9" y=".5" width="3.6" height="3.8" fill="#e8432e" stroke="#444" stroke-width=".8"/><rect x=".5" y="6.2" width="3.6" height="3.8" fill="#3b7fdc" stroke="#444" stroke-width=".8"/><rect x="5.9" y="6.2" width="3.6" height="3.8" fill="#5dbb3b" stroke="#444" stroke-width=".8"/></svg>
 <div class="dvt" style="left:19px;top:628.5px">编译器</div>
 <svg style="left:50px;top:627.5px" width="10" height="10" viewBox="0 0 10 10"><rect x=".4" y=".4" width="5" height="5" fill="#3f9a3f" stroke="#222" stroke-width=".6"/><rect x="2.4" y="2.4" width="5" height="5" fill="#d23a2a" stroke="#222" stroke-width=".6"/><rect x="4.5" y="4.5" width="5" height="5" fill="#3a62c8" stroke="#222" stroke-width=".6"/></svg>
 <div class="dvt" style="left:63.5px;top:628.5px">资源</div>
 <svg style="left:87px;top:626px" width="10" height="10" viewBox="0 0 11 10.5"><rect x=".6" y="4.5" width="2.6" height="5.5" fill="#e8432e" stroke="#222" stroke-width=".7"/><rect x="3.9" y=".6" width="2.8" height="9.4" fill="#f6b21b" stroke="#222" stroke-width=".7"/><rect x="7.4" y="2.8" width="2.8" height="7.2" fill="#3fa54a" stroke="#222" stroke-width=".7"/></svg>
 <div class="dvt" style="left:100px;top:627px">编译日志</div>
 <svg style="left:140px;top:628px" width="10" height="9" viewBox="0 0 12 9.5"><path d="M.6 5.500l2-1.300 1.800 2.300L10.600.5l.9.700L4.600 9.200z" fill="#9a7fd6" stroke="#5b3fa0" stroke-width=".5"/></svg>
 <div class="dvt" style="left:153px;top:628.5px">调试</div>
 <svg style="left:177px;top:627.5px" width="10.5" height="10.5" viewBox="0 0 10.500 10.5"><rect x=".5" y=".5" width="7.5" height="9" fill="#dadada" stroke="#6a6a6a" stroke-width=".9"/><circle cx="5" cy="4.6" r="2.7" fill="#cfeefa" stroke="#333" stroke-width="1"/><path d="M7 6.800l3 3" stroke="#c58a17" stroke-width="1.7"/></svg>
 <div class="dvt" style="left:190.5px;top:628.5px">搜索结果 (14)</div>
 <svg style="left:244px;top:627.5px" width="10" height="10.5" viewBox="0 0 10.500 10.5"><rect x="3" y=".5" width="7" height="9.5" rx=".6" fill="#e6e6e6" stroke="#6a6a6a"/><path d="M.8 2.200l5 5M5.800 2.200l-5 5" stroke="#e01b24" stroke-width="1.9"/></svg>
 <div class="dvt" style="left:257px;top:628.5px">关闭</div>
 <!-- compile log panel -->
 <div class="abs" style="left:5px;top:644.5px;width:87.5px;height:17px;background:#f3f3f3;border:1px solid #e0e0e0;border-radius:2px"></div>
 <div class="dvt" style="left:41.5px;top:649px;color:#a6a6a6">中止</div>
 <div class="abs" style="left:5px;top:666px;width:88.5px;height:14.5px;background:#e6e6e6;border:1px solid #bcbcbc"></div>
 <div class="abs" style="left:5px;top:685.5px;width:7.5px;height:7.5px;background:#fff;border:1px solid #666;border-radius:1px"></div>
 <div class="dvt" style="left:14.5px;top:685px;font-size:7.3px">Shorten compiler paths</div>
 <div class="abs" style="left:99.5px;top:641.5px;width:619px;height:42.5px;background:#fff"></div>
 <div class="abs" style="left:99.5px;top:684px;width:619px;height:9.5px;background:#f0f0f0"></div>
 <div class="abs" style="left:718.5px;top:641.5px;width:10px;height:52px;background:#f0f0f0"></div>
 <div class="abs" style="left:722.5px;top:662px;width:1.3px;height:11px;background:#7a7a7a"></div>
 <div class="abs" style="left:110.5px;top:687.7px;width:137px;height:1.8px;background:#8c8c8c;border-radius:1px"></div>
 <div class="abs" style="left:99.5px;top:694px;width:629.5px;height:1px;background:#b4b4b4"></div>
 <div class="logt" style="top:642.2px">- <span class="lc">输出文件名</span>: D:\proMatheus\st.exe</div>
 <div class="logt" style="top:651.9px">- <span class="lc">输出大小</span>: 2.08144569396973 MiB</div>
 <div class="logt" style="top:661.6px">- <span class="lc">编译时间</span>: 0.73s</div>
 <!-- status bar -->
 <div class="dvt" style="left:1.5px;top:699.5px">行:</div><div class="dvt" style="left:18px;top:699.5px">60</div>
 <div class="dvt" style="left:54px;top:699.5px">列:</div><div class="dvt" style="left:71px;top:699.5px">80</div>
 <div class="dvt" style="left:106.5px;top:699.5px">已选择:</div><div class="dvt" style="left:141.5px;top:699.5px">0</div>
 <div class="dvt" style="left:173px;top:699.5px">总行数:</div><div class="dvt" style="left:206px;top:699.5px">65</div>
 <div class="dvt" style="left:241px;top:699.5px">长度:</div><div class="dvt" style="left:263.5px;top:699.5px">1997</div>
 <div class="abs" style="left:294.5px;top:697px;width:1px;height:12px;background:#d8d8d8"></div>
 <div class="dvt" style="left:299px;top:699.5px">插入</div>
 <div class="abs" style="left:344.5px;top:697px;width:1px;height:12px;background:#d8d8d8"></div>
 <div class="dvt" style="left:347.5px;top:699.5px">自动保存文件 "C:\Users\ASUS\Documents\T.cpp"</div>
 <!-- right border -->
 <div class="abs" style="left:730px;top:0;width:3px;height:710px;background:linear-gradient(90deg,#8a8a8a,#5a5a5a)"></div>
</div>
<div id="con">
<div id="contitle"></div>
<div class="abs" style="left:6.5px;top:5.5px;width:7.5px;height:6.5px;background:#f5f5f5;border:1px solid #9aa;border-radius:1px"></div>
<div class="abs" style="left:7.5px;top:6.5px;width:3.5px;height:4.5px;background:#3a5a6a"></div>
<div class="t" style="left:18.5px;top:5.8px;font-size:7.4px;color:#111;letter-spacing:.06px">D:\proMatheus\st.exe</div>
<div class="abs" style="left:529.5px;top:9.2px;width:6px;height:.8px;background:#444"></div>
<div class="abs" style="left:557px;top:6px;width:6.2px;height:6.5px;border:.85px solid #3a3a3a;border-radius:1.2px"></div>
<svg style="left:585px;top:6px" width="6.5" height="6.5" viewBox="0 0 7 7"><path d="M.3.3l6.400 6.400M6.700.3L.3 6.7" stroke="#333" stroke-width=".8"/></svg>
<div id="conscroll"></div>
<div class="abs" style="left:597px;top:33px;width:1.3px;height:10px;background:#7a7a7a"></div>
<div class="co" style="top:19.8px">Generating test case 144</div>
<div class="co" style="top:29.67px">Generating test case 145</div>
<div class="co" style="top:39.54px">Generating test case 146</div>
<div class="co" style="top:49.41px">Generating test case 147</div>
<div class="co" style="top:59.28px">Generating test case 148</div>
<div class="co" style="top:69.15px">Generating test case 149</div>
<div class="co" style="top:79.02px">Generating test case 150</div>
<div class="co" style="top:88.89px">Generating test case 151</div>
<div class="co" style="top:98.76px">Generating test case 152</div>
<div class="co" style="top:108.63px">Generating test case 153</div>
<div class="co" style="top:118.5px">Generating test case 154</div>
<div class="co" style="top:128.37px">Generating test case 155</div>
<div class="co" style="top:138.24px">Generating test case 156</div>
<div class="co" style="top:148.11px">Generating test case 157</div>
<div class="co" style="top:157.98px">Generating test case 158</div>
<div class="co" style="top:167.85px">Generating test case 159</div>
<div class="co" style="top:177.72px">Generating test case 160</div>
<div class="co" style="top:187.59px">Generating test case 161</div>
<div class="co" style="top:197.46px">Generating test case 162</div>
<div class="co" style="top:207.33px">Generating test case 163</div>
<div class="co" style="top:217.2px">Generating test case 164</div>
<div class="co" style="top:227.07px">Generating test case 165</div>
<div class="co" style="top:236.94px">Generating test case 166</div>
<div class="co" style="top:246.81px">Generating test case 167</div>
<div class="co" style="top:256.68px">Generating test case 168</div>
<div class="co" style="top:266.55px">Generating test case 169</div>
<div class="co" style="top:276.42px">Generating test case 170</div>
<div class="co" style="top:286.29px">Generating test case 171</div>
<div class="co" style="top:296.16px">Generating test case 172</div>
<div class="abs" style="left:0;top:312.2px;width:5px;height:1.6px;background:#e8e8e8"></div>
</div><div id="tb">
 <!-- widgets -->
 <div class="abs" style="left:6.5px;top:8px;width:15px;height:14.5px;background:#1679d3;border-radius:2px"></div>
 <div class="abs" style="left:8.5px;top:10px;width:5.5px;height:10.5px;background:#fff;border-radius:.8px"></div>
 <div class="abs" style="left:15px;top:10px;width:4.5px;height:10.5px;background:#5db5f2;border-radius:.8px"></div>
 <!-- start -->
 <div class="abs" style="left:366.5px;top:8px;width:7px;height:7px;background:#1b8fe3"></div>
 <div class="abs" style="left:374.2px;top:8px;width:7px;height:7px;background:#1f97ea"></div>
 <div class="abs" style="left:366.5px;top:15.7px;width:7px;height:7px;background:#167fd6"></div>
 <div class="abs" style="left:374.2px;top:15.7px;width:7px;height:7px;background:#1989df"></div>
 <!-- search -->
 <div class="abs" style="left:389.5px;top:6px;width:134.5px;height:18.5px;border-radius:9.3px;background:rgba(255,255,255,.62);box-shadow:0 0 0 .5px rgba(180,200,205,.5)"></div>
 <svg style="left:396.5px;top:10.5px" width="9" height="9.5" viewBox="0 0 9 9.5"><circle cx="3.8" cy="3.8" r="3.1" fill="none" stroke="#222" stroke-width="1.1"/><path d="M6 6.200l2.600 2.8" stroke="#222" stroke-width="1.2"/></svg>
 <div class="t" style="left:412px;top:11px;font-size:8.3px;color:#555">搜索</div>
 <!-- flower + cup -->
 <svg style="left:492px;top:9px" width="28" height="15" viewBox="0 0 28 15"><circle cx="5" cy="6" r="3.6" fill="#d9d3e3"/><circle cx="11" cy="4.5" r="3.8" fill="#e9b52c"/><circle cx="11" cy="4.5" r="1.4" fill="#b87a12"/><path d="M10.500 8l.5 6.500M8 12l3 2 3-3" stroke="#6d9b3a" stroke-width="1.3" fill="none"/><rect x="17" y="6.5" width="9.5" height="8" rx="2" fill="#e6d6b0"/><ellipse cx="21.7" cy="6.8" rx="4.7" ry="1.6" fill="#f4ead0"/><ellipse cx="21.5" cy="3.5" rx="2.5" ry="2.5" fill="#dceaf3" opacity=".8"/></svg>
 <!-- task view -->
 <div class="abs" style="left:536.5px;top:7.8px;width:10.5px;height:10.5px;background:#f4f4f4;border-radius:1px;box-shadow:0 0 1px rgba(0,0,0,.4)"></div>
 <div class="abs" style="left:532.3px;top:11.5px;width:11px;height:10.5px;background:#262626;border-radius:1px"></div>
 <!-- explorer -->
 <svg style="left:559px;top:6.9px" width="16" height="14.5" viewBox="0 0 16 14.5"><path d="M.5 1.200h5l1.500 1.800h8.500v10.500H.5z" fill="#f7c535"/><rect x=".5" y="4" width="15" height="9.5" rx=".8" fill="#fbd75b"/><rect x="3.5" y="9" width="9" height="4.5" fill="#2a86d6"/></svg>
 <div class="ind" style="left:565.5px"></div>
 <!-- dev -->
 <div class="abs" style="left:586px;top:7.4px;width:15.5px;height:15px;background:#0b2a7a;border-radius:1px;border:1px solid #08164a"></div>
 <div class="t" style="left:588px;top:8.4px;font-size:6.2px;font-weight:bold;color:#fff">DEV</div>
 <div class="abs" style="left:588px;top:15.4px;width:11.5px;height:5px;background:#2466d8"></div>
 <div class="ind" style="left:592.5px"></div>
 <!-- edge -->
 <svg style="left:613px;top:7.4px" width="15.5" height="15.5" viewBox="0 0 16 16"><circle cx="8" cy="8" r="7.6" fill="#1b9de2"/><path d="M.6 9.500C1 4 4.500 1 8.500.6c4 0 6.900 3 6.900 6 0 2-1.500 3.300-3.400 3.300-1.500 0-2-.8-1.800-1.500C10.800 6 9 4.300 6.800 4.500 3.500 4.800 1.200 7 .6 9.500z" fill="#35c1a5"/><path d="M5 8.500c0-1.700 1.400-3 3.200-3 1.500 0 2.400 1 2.200 2.400-.2 1.300.8 2.300 2.500 2.100-1 3-3 4.600-5.200 4.200C5.800 13.800 5 11.300 5 8.500z" fill="#e6f4fa"/><path d="M3.400 10c.3 3 2.800 5.400 6 5.500-3.500 1-7.600-.8-8.700-5.200.4-1.500 1.400-2.800 2.900-3.300-.3.900-.3 2-.2 3z" fill="#0e5fb8"/></svg>
 <div class="ind" style="left:619.5px"></div>
 <!-- paint -->
 <svg style="left:641px;top:7.4px" width="15.5" height="15.5" viewBox="0 0 16 16"><path d="M8 1C3.500 1 .5 4.500.8 8.500c.3 3.500 3 6 5.700 6 1.500 0 1.500-1.300 1-2.200-.5-1 .2-2 1.500-2h2.500c2 0 3.700-1.300 3.700-3.500C15.200 3.500 12 1 8 1z" fill="#3aa0e8"/><circle cx="4.5" cy="6" r="1.3" fill="#e8432e"/><circle cx="7.5" cy="3.8" r="1.3" fill="#f6d21b"/><circle cx="11" cy="4.5" r="1.3" fill="#5dbb3b"/><rect x="11.5" y="5.5" width="2.3" height="10" rx=".6" fill="#c98a3a"/><rect x="11.5" y="5.5" width="2.3" height="3" fill="#6a4a22"/></svg>
 <div class="ind" style="left:647px"></div>
 <!-- notepad -->
 <svg style="left:669px;top:6.9px" width="13.5" height="16" viewBox="0 0 13.500 16"><rect x=".5" y="1.2" width="12.5" height="14" rx="1" fill="#36a3e6"/><rect x=".5" y="13" width="12.5" height="2.5" fill="#c78a4a"/><path d="M2.800 4.500h8M2.800 6.500h8M2.800 8.500h8M2.800 10.500h8" stroke="#cfeaf9" stroke-width=".9"/><path d="M3 .3v2M5.500 .3v2M8 .3v2M10.500 .3v2" stroke="#333" stroke-width=".8"/></svg>
 <div class="ind" style="left:674px"></div>
 <!-- photos -->
 <svg style="left:695px;top:7.4px" width="15" height="15" viewBox="0 0 15 15"><rect x=".3" y=".3" width="14.4" height="14.4" rx="1.2" fill="#2f8de0"/><path d="M.3 12l5.200-6 4 4.800 1.800-1.600 3.400 3.500v.8a1.200 1.200 0 0 1-1.200 1.200H1.500A1.200 1.200 0 0 1 .3 13.500z" fill="#0f3f88"/><circle cx="10.8" cy="4" r="1.5" fill="#e8f4ff"/></svg>
 <div class="ind" style="left:701px"></div>
 <!-- calc -->
 <svg style="left:723.5px;top:6.9px" width="11.5" height="16" viewBox="0 0 11.500 16"><rect x=".3" y=".3" width="10.9" height="15.4" rx="1" fill="#6a7684"/><rect x="1.5" y="1.6" width="8.5" height="3" fill="#3aa0e8"/><g fill="#d9dee4"><rect x="1.5" y="6" width="2.3" height="2"/><rect x="4.6" y="6" width="2.3" height="2"/><rect x="7.7" y="6" width="2.3" height="2"/><rect x="1.5" y="9" width="2.3" height="2"/><rect x="4.6" y="9" width="2.3" height="2"/><rect x="1.5" y="12" width="2.3" height="2"/><rect x="4.6" y="12" width="2.3" height="2"/></g><rect x="7.7" y="9" width="2.3" height="5" fill="#2b6fc4"/></svg>
 <div class="ind" style="left:728px"></div>
 <!-- settings -->
 <svg style="left:748.5px;top:7.4px" width="15.5" height="15.5" viewBox="0 0 16 16"><path d="M6.600.5h2.800l.5 2 1.400.8 2-.7 1.400 2.400-1.500 1.400v1.500l1.500 1.400-1.400 2.400-2-.6-1.400.8-.5 2H6.600l-.5-2-1.400-.8-2 .6-1.400-2.400 1.500-1.400V7.900L1.300 6.500l1.400-2.400 2 .7 1.400-.8z" fill="#6b7480"/><circle cx="8" cy="8" r="3.3" fill="#2f7fe0"/><circle cx="8" cy="8" r="1.7" fill="#d8e8f8"/></svg>
 <div class="ind" style="left:755px"></div>
 <!-- snipping -->
 <svg style="left:776px;top:6.9px" width="15.5" height="16" viewBox="0 0 15.500 16"><rect x=".8" y=".8" width="9.5" height="9" fill="#fff" stroke="#e0453a" stroke-width="1.5" stroke-dasharray="2 1.2"/><path d="M8.500 5.500v7M6 9.500h8" stroke="#4a9ee8" stroke-width="1.1"/><circle cx="8.5" cy="13.8" r="1.4" fill="none" stroke="#2f7fe0" stroke-width="1"/><circle cx="14" cy="9.5" r="1.3" fill="none" stroke="#2f7fe0" stroke-width="1"/></svg>
 <div class="ind" style="left:782px"></div>
 <!-- console active -->
 <div class="abs" style="left:799px;top:3.5px;width:23.5px;height:24px;border-radius:2.5px;background:rgba(255,255,255,.55);box-shadow:0 0 0 .5px rgba(200,215,215,.7)"></div>
 <div class="abs" style="left:803.5px;top:8.5px;width:14.5px;height:12.5px;background:#f4f4f4;border:1px solid #9a9a9a;border-radius:1px"></div>
 <div class="abs" style="left:805px;top:10.5px;width:6.5px;height:8.5px;background:#4b6f7a"></div>
 <div class="abs" style="left:814px;top:11px;width:1.2px;height:5px;background:#4a9a6a"></div>
 <div class="abs" style="left:806px;top:25px;width:9.5px;height:2px;border-radius:1px;background:#1673d6"></div>
 <!-- tray -->
 <svg style="left:1028.5px;top:13px" width="8" height="5" viewBox="0 0 8 5"><path d="M.5 4.500L4 .8l3.500 3.7" fill="none" stroke="#222" stroke-width="1"/></svg>
 <div class="t" style="left:1046.5px;top:11px;font-size:9.2px;color:#111">英</div>
 <svg style="left:1066.5px;top:11px" width="10" height="8" viewBox="0 0 10 8"><path d="M.5 2.800a6.400 6.400 0 0 1 9 0M2 4.500a4.300 4.300 0 0 1 6 0M3.500 6a2.200 2.200 0 0 1 3 0" fill="none" stroke="#222" stroke-width=".9"/><circle cx="5" cy="7.2" r=".7" fill="#222"/></svg>
 <svg style="left:1081px;top:10.5px" width="11" height="9" viewBox="0 0 11 9"><path d="M.5 3h1.800L5 .6v7.800L2.300 6H.5z" fill="none" stroke="#222" stroke-width=".9" stroke-linejoin="round"/><path d="M6.500 2.800a2.500 2.500 0 0 1 0 3.400M8 1.500a4.300 4.300 0 0 1 0 6M9.500.5a6 6 0 0 1 0 8" fill="none" stroke="#222" stroke-width=".8"/></svg>
 <svg style="left:1096px;top:11px" width="11" height="8" viewBox="0 0 11 8"><rect x=".5" y="1.8" width="8.8" height="5.4" rx="1.2" fill="#222"/><rect x="9.6" y="3.3" width="1" height="2.4" fill="#222"/><path d="M1.500 .3l1.500 2M3.500 0v2" stroke="#222" stroke-width="1"/></svg>
 <div class="t" style="left:1100px;width:55px;text-align:right;top:6.5px;font-size:7.5px;color:#222">20:23</div>
 <div class="t" style="left:1100px;width:55px;text-align:right;top:15.8px;font-size:7.5px;color:#222">2025/10/29</div>
 <div class="abs" style="left:1161.5px;top:12px;width:9.5px;height:9.5px;border-radius:50%;background:#1268d0"></div>
 <div class="t" style="left:1164.5px;top:13.5px;font-size:6.5px;color:#fff">2</div>
 <div class="t" style="left:1119px;top:14px;font-size:9px;color:rgba(110,120,120,.4)">@51CTO博客</div>
</div>
</body></html>
